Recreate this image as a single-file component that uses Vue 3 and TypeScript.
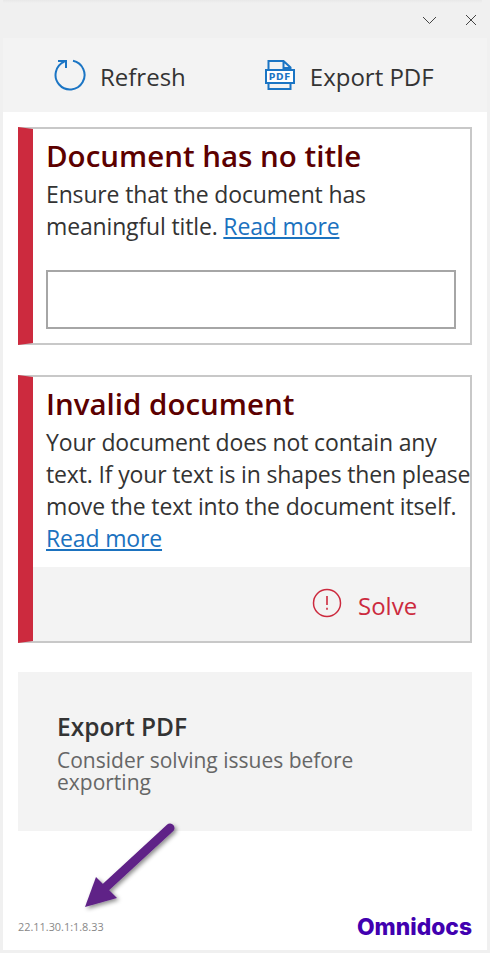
<template>
  <div class="window">
    <div class="titlebar">
      <button class="win-btn" aria-label="Collapse">
        <svg width="15" height="9" viewBox="0 0 15 9"><path d="M1 1l6.500 6.500L14 1" fill="none" stroke="#444" stroke-width="1" /></svg>
      </button>
      <button class="win-btn" aria-label="Close">
        <svg width="12" height="12" viewBox="0 0 12 12"><path d="M1 1l10 10M11 1L1 11" fill="none" stroke="#444" stroke-width="1" /></svg>
      </button>
    </div>

    <div class="panel">
      <div class="toolbar">
        <button class="tool refresh">
          <svg width="32" height="32" viewBox="0 0 32 32">
            <path d="M19 1.800A14.500 14.500 0 1 1 10.500 2.600" fill="none" stroke="#1b75c4" stroke-width="2" />
            <path d="M4 2h8v7" fill="none" stroke="#1b75c4" stroke-width="2" />
          </svg>
          <span>Refresh</span>
        </button>
        <button class="tool export">
          <svg width="30" height="32" viewBox="0 0 30 32">
            <path d="M3.500 11V2h15l7 6.500V11M3.500 24v6h22v-6M18.500 2v7h7" fill="none" stroke="#1b75c4" stroke-width="2" />
            <rect x="1" y="11" width="28" height="13" fill="#fff" stroke="#1b75c4" stroke-width="2" />
            <text x="15" y="21" text-anchor="middle" class="pdf-mark">PDF</text>
          </svg>
          <span>Export PDF</span>
        </button>
      </div>

      <div class="content">
        <section class="issue first">
          <div class="issue-body">
            <h2>Document has no title</h2>
            <p>Ensure that the document has meaningful title. <a href="#">Read more</a></p>
            <input class="title-input" type="text" />
          </div>
        </section>

        <section class="issue second">
          <div class="issue-body">
            <h2>Invalid document</h2>
            <p class="fixed-lines">Your document does not contain any<br />text. If your text is in shapes then please<br />move the text into the document itself.<br /><a href="#">Read more</a></p>
          </div>
          <div class="solve-row">
            <svg width="30" height="30" viewBox="0 0 30 30">
              <circle cx="15" cy="15" r="13.500" fill="none" stroke="#cc2a3e" stroke-width="1.500" />
              <path d="M15 8v9M15 19.800v2" fill="none" stroke="#cc2a3e" stroke-width="1.600" />
            </svg>
            <span>Solve</span>
          </div>
        </section>

        <section class="export-box">
          <h3>Export PDF</h3>
          <p>Consider solving issues before exporting</p>
        </section>

        <footer class="foot">
          <span class="version">22.11.30.1:1.8.33</span>
          <span class="brand">Omnidocs</span>
        </footer>
      </div>
    </div>

    <!-- annotation drawn on top of the screenshot -->
    <svg class="arrow" width="110" height="110" viewBox="0 0 110 110">
      <defs>
        <filter id="arrow-shadow" x="-20%" y="-20%" width="150%" height="150%">
          <feDropShadow dx="2" dy="2" stdDeviation="2" flood-color="#000" flood-opacity="0.45" />
        </filter>
      </defs>
      <g filter="url(#arrow-shadow)" fill="#5f2187">
        <path d="M95 16L31 75" stroke="#5f2187" stroke-width="9" stroke-linecap="round" fill="none" />
        <path d="M10 95L21 65L42 86Z" />
      </g>
    </svg>
  </div>
</template>

<script setup lang="ts">
</script>

<style>
html, body { margin: 0; padding: 0; background: #f0f0f0; }
</style>

<style scoped>
.window {
  position: relative;
  width: 490px;
  height: 953px;
  box-sizing: border-box;
  padding: 0 3px 3px;
  display: flex;
  flex-direction: column;
  background: #f0f0f0;
  font-family: "Open Sans", "Noto Sans", sans-serif;
  color: #333;
  overflow: hidden;
}
.titlebar {
  height: 38px;
  flex: none;
  display: flex;
  justify-content: flex-end;
  align-items: center;
  gap: 28px;
  padding: 2px 10px 0 0;
  box-sizing: border-box;
  background: linear-gradient(#e8e8e8, #f0f0f0) no-repeat;
  background-size: 479px 3px;
}
.win-btn {
  border: 0;
  padding: 0;
  background: none;
  display: flex;
  align-items: center;
  justify-content: center;
}
.panel {
  flex: 1;
  display: flex;
  flex-direction: column;
  background: #fff;
}
.toolbar {
  height: 74px;
  flex: none;
  display: flex;
  align-items: center;
  background: #f3f3f3;
}
.tool {
  border: 0;
  padding: 0;
  background: none;
  display: flex;
  align-items: center;
  font: inherit;
  font-size: 24px;
  color: #333;
}
.tool span { padding-top: 2px; }
.tool.refresh { margin-left: 51px; gap: 14px; }
.tool.export { margin-left: 79px; gap: 15px; }
.pdf-mark {
  font-family: "DejaVu Sans", sans-serif;
  font-weight: 700;
  font-size: 9px;
  letter-spacing: 0.8px;
  fill: #1b75c4;
}
.content {
  flex: 1;
  display: flex;
  flex-direction: column;
  padding: 15px 15px 0;
}
.issue {
  border: 2px solid #c8c8c8;
  border-left: 15px solid #cc2a3e;
  background: #fff;
  box-sizing: border-box;
}
.issue.first { height: 218px; }
.issue.second {
  margin-top: 30px;
  height: 268px;
  display: flex;
  flex-direction: column;
}
.issue-body { padding: 7px 0 0 13px; }
.issue.second .issue-body { flex: 1; min-height: 0; }
.issue h2 {
  margin: 0 0 2px;
  font-size: 29.500px;
  line-height: 40px;
  font-weight: 600;
  color: #5c0000;
}
.issue p {
  margin: 0;
  font-size: 23px;
  letter-spacing: -0.150px;
  line-height: 32px;
  color: #333;
}
.issue p.fixed-lines { white-space: nowrap; }
.issue a { color: #1b72bf; text-decoration: underline; }
.title-input {
  display: block;
  box-sizing: border-box;
  width: 410px;
  height: 59px;
  margin-top: 28px;
  border: 2px solid #a6a6a6;
  background: #fff;
  outline: none;
}
.solve-row {
  height: 74px;
  flex: none;
  display: flex;
  align-items: center;
  background: #f3f3f3;
  color: #cc2a3e;
  font-size: 24px;
  padding-left: 279px;
  gap: 16px;
}
.solve-row svg { margin-bottom: 3px; }
.solve-row span { padding-top: 2px; }
.export-box {
  margin-top: 29px;
  height: 159px;
  box-sizing: border-box;
  background: #f3f3f3;
  padding: 39px 39px 0;
}
.export-box h3 {
  margin: 0 0 6px;
  font-size: 24.500px;
  line-height: 32px;
  font-weight: 600;
  color: #333;
}
.export-box p {
  margin: 0;
  font-size: 21px;
  line-height: 22px;
  color: #666;
}
.foot {
  margin-top: auto;
  display: flex;
  justify-content: space-between;
  align-items: center;
  height: 30px;
  margin-bottom: 9px;
}
.version { font-size: 10.900px; color: #888; }
.brand {
  font-family: Inter, sans-serif;
  font-weight: 800;
  font-size: 22.800px;
  color: #4100b0;
}
.arrow {
  position: absolute;
  left: 75px;
  top: 812px;
}
</style>
